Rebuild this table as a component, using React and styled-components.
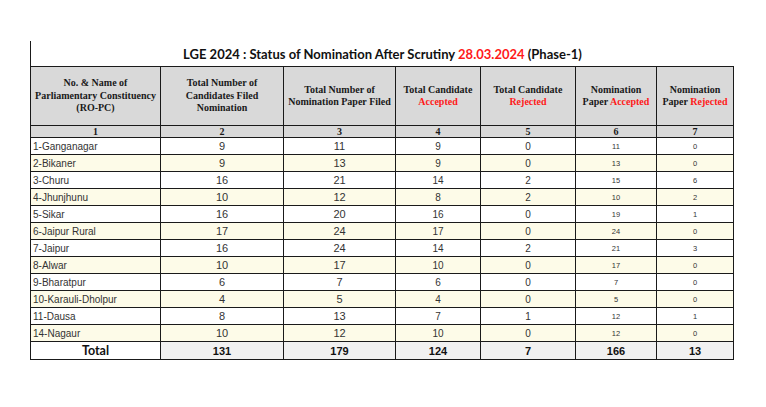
import React from "react";
import styled, { createGlobalStyle } from "styled-components";

const GlobalStyle = createGlobalStyle`
  html, body {
    margin: 0;
    padding: 0;
    background: #ffffff;
  }
`;

const rows = [
  ["1-Ganganagar", 9, 11, 9, 0, 11, 0],
  ["2-Bikaner", 9, 13, 9, 0, 13, 0],
  ["3-Churu", 16, 21, 14, 2, 15, 6],
  ["4-Jhunjhunu", 10, 12, 8, 2, 10, 2],
  ["5-Sikar", 16, 20, 16, 0, 19, 1],
  ["6-Jaipur Rural", 17, 24, 17, 0, 24, 0],
  ["7-Jaipur", 16, 24, 14, 2, 21, 3],
  ["8-Alwar", 10, 17, 10, 0, 17, 0],
  ["9-Bharatpur", 6, 7, 6, 0, 7, 0],
  ["10-Karauli-Dholpur", 4, 5, 4, 0, 5, 0],
  ["11-Dausa", 8, 13, 7, 1, 12, 1],
  ["14-Nagaur", 10, 12, 10, 0, 12, 0],
];

const totals = [131, 179, 124, 7, 166, 13];
const widths = [130, 123, 112, 85, 95, 81, 77];
// font size per data column, the sheet shrinks the later columns
const sizes = [10, 11, 11, 10, 10, 7.5, 7.5];

export default function App() {
  return (
    <Page>
      <GlobalStyle />
      <Sheet>
        <Title>
          LGE 2024 : Status of Nomination After Scrutiny{" "}
          <Red>28.03.2024</Red> (Phase-1)
        </Title>
        <Table>
          <colgroup>
            {widths.map((w, i) => (
              <col key={i} style={{ width: w }} />
            ))}
          </colgroup>
          <thead>
            <HeadRow>
              <Th>
                No. &amp; Name of
                <br />
                Parliamentary Constituency
                <br />
                (RO-PC)
              </Th>
              <Th>
                Total Number of
                <br />
                Candidates Filed
                <br />
                Nomination
              </Th>
              <Th>
                Total Number of
                <br />
                Nomination Paper Filed
              </Th>
              <Th>
                Total Candidate
                <br />
                <Red>Accepted</Red>
              </Th>
              <Th>
                Total Candidate
                <br />
                <Red>Rejected</Red>
              </Th>
              <Th>
                Nomination
                <br />
                Paper <Red>Accepted</Red>
              </Th>
              <Th>
                Nomination
                <br />
                Paper <Red>Rejected</Red>
              </Th>
            </HeadRow>
            <NumRow>
              {widths.map((_, i) => (
                <NumCell key={i}>{i + 1}</NumCell>
              ))}
            </NumRow>
          </thead>
          <tbody>
            {rows.map((r, ri) => (
              <DataRow key={r[0]} $alt={ri % 2 === 1}>
                {r.map((v, ci) => (
                  <Td key={ci} $left={ci === 0} $size={sizes[ci]}>
                    {v}
                  </Td>
                ))}
              </DataRow>
            ))}
            <TotalRow>
              <TotalLabel>Total</TotalLabel>
              {totals.map((t, i) => (
                <TotalCell key={i}>{t}</TotalCell>
              ))}
            </TotalRow>
          </tbody>
        </Table>
      </Sheet>
    </Page>
  );
}

const Page = styled.div`
  width: 766px;
  height: 407px;
  padding: 41px 0 0 30px;
  box-sizing: border-box;
  background: #ffffff;
`;

const Sheet = styled.div`
  width: 704px;
  display: flex;
  flex-direction: column;
`;

const Title = styled.div`
  height: 25px;
  border-left: 1px solid #1a1a1a;
  box-sizing: border-box;
  padding-top: 1px;
  font-family: Lato, "Liberation Sans", sans-serif;
  font-weight: 700;
  font-size: 13px;
  line-height: 24px;
  color: #111;
  text-align: center;
  white-space: nowrap;
`;

const Red = styled.span`
  color: #ff1a1a;
`;

const Table = styled.table`
  border-collapse: collapse;
  table-layout: fixed;
  width: 704px;
  border: 1.5px solid #1a1a1a;
`;

const HeadRow = styled.tr`
  height: 59px;
  background: #d9d9d9;
`;

const Th = styled.th`
  border: 1px solid #1a1a1a;
  padding: 0 1px;
  font-family: "Liberation Serif", serif;
  font-weight: 700;
  font-size: 10px;
  line-height: 12.5px;
  color: #1a1a1a;
  text-align: center;
  vertical-align: middle;
  white-space: nowrap;
`;

const NumRow = styled.tr`
  height: 12px;
  background: #d9d9d9;
`;

const NumCell = styled.th`
  border: 1px solid #1a1a1a;
  border-top-width: 1.5px;
  padding: 0;
  font-family: "Liberation Serif", serif;
  font-weight: 700;
  font-size: 10px;
  line-height: 11px;
  color: #1a1a1a;
`;

const DataRow = styled.tr`
  height: 17px;
  background: ${(p) => (p.$alt ? "#fdfbe8" : "#ffffff")};
`;

const Td = styled.td`
  border: 1px solid #1a1a1a;
  padding: ${(p) => (p.$left ? "0 0 0 2px" : "0")};
  font-family: "Liberation Sans", Arial, sans-serif;
  font-size: ${(p) => p.$size}px;
  line-height: 15px;
  color: #333333;
  text-align: ${(p) => (p.$left ? "left" : "center")};
  vertical-align: middle;
  white-space: nowrap;
`;

const TotalRow = styled.tr`
  height: 18px;
  background: #f1f1f1;
`;

const TotalLabel = styled.td`
  border: 1px solid #1a1a1a;
  background: #ffffff;
  font-family: Lato, "Liberation Sans", sans-serif;
  font-weight: 700;
  font-size: 12.5px;
  color: #111;
  text-align: center;
  padding: 0;
`;

const TotalCell = styled.td`
  border: 1px solid #1a1a1a;
  font-family: "Liberation Sans", Arial, sans-serif;
  font-weight: 700;
  font-size: 11px;
  color: #111;
  text-align: center;
  padding: 0;
`;
